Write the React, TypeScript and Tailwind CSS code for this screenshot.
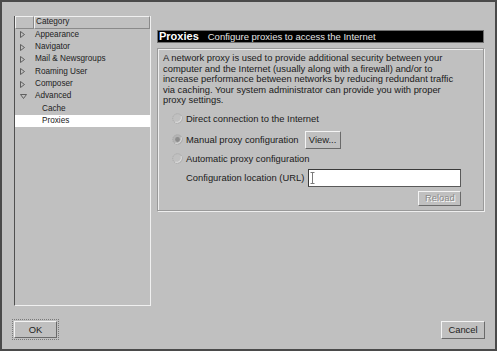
import React from 'react'

const font = "font-['Liberation_Sans',Arial,sans-serif]"

const Arrow = ({ open }: { open?: boolean }) =>
  open ? (
    <svg width="7" height="5" viewBox="0 0 7 5" className="shrink-0">
      <polygon points="0.5,0.5 6.5,0.5 3.5,4.5" fill="none" stroke="#555" strokeWidth="0.9" />
    </svg>
  ) : (
    <svg width="5" height="7" viewBox="0 0 5 7" className="shrink-0">
      <polygon points="0.5,0.5 4.5,3.5 0.5,6.5" fill="none" stroke="#555" strokeWidth="0.9" />
    </svg>
  )

const Radio = ({ checked }: { checked?: boolean }) => (
  <svg width="11" height="11" viewBox="0 0 11 11" className="shrink-0">
    <circle cx="5.5" cy="5.5" r="4.8" fill={checked ? '#b4b4b4' : 'none'} stroke="#a2a2a2" strokeWidth="0.8" strokeDasharray="1.2 0.8" />
    <path d="M9.2 3.2 A4.8 4.8 0 0 1 3.2 9.2" fill="none" stroke="#e6e6e6" strokeWidth="0.8" />
    {checked && <circle cx="5.5" cy="5.5" r="2.4" fill="#8c8c8c" />}
  </svg>
)

const TreeRow = ({ label, arrow, open, indent, selected }: { label: string; arrow?: boolean; open?: boolean; indent?: boolean; selected?: boolean }) => (
  <div className={`h-[12.3px] flex items-center ${selected ? 'bg-white' : ''}`}>
    <div className="w-[20px] pl-[5px] flex items-center">{arrow && <Arrow open={open} />}</div>
    <span className={`text-[8.2px] leading-none text-[#222] ${indent ? 'pl-[7px]' : ''}`}>{label}</span>
  </div>
)

const RaisedButton = ({ children, className = '', disabled }: { children: React.ReactNode; className?: string; disabled?: boolean }) => (
  <div
    className={`flex items-center justify-center bg-[#c0c0c0] border border-t-[#f4f4f4] border-l-[#f4f4f4] border-b-[#6a6a6a] border-r-[#6a6a6a] text-[9.4px] leading-none ${
      disabled ? 'text-[#8a8a8a] [text-shadow:1px_1px_0_#fff]' : 'text-[#222]'
    } ${className}`}
  >
    {children}
  </div>
)

export default function App() {
  return (
    <div className={`w-[499px] h-[352px] bg-white ${font}`}>
      <div className="w-[497px] h-[351px] border-2 border-[#4a4a4a] bg-[#c0c0c0] flex flex-col">
        <div className="flex pl-[12px] pt-[14px]">
          {/* tree */}
          <div className="w-[137px] h-[290px] border-l border-l-[#505050] border-r border-r-[#f0f0f0] border-b border-b-[#f0f0f0] flex flex-col">
            <div className="h-[12.7px] flex">
              <div className="w-[19px] border border-t-[#f0f0f0] border-l-[#f0f0f0] border-b-[#8a8a8a] border-r-[#8a8a8a]" />
              <div className="flex-1 border border-t-[#f0f0f0] border-l-[#f0f0f0] border-b-[#8a8a8a] border-r-[#8a8a8a] flex items-center pl-[1px] text-[8.2px] text-[#222] leading-none">
                Category
              </div>
            </div>
            <TreeRow label="Appearance" arrow />
            <TreeRow label="Navigator" arrow />
            <TreeRow label="Mail & Newsgroups" arrow />
            <TreeRow label="Roaming User" arrow />
            <TreeRow label="Composer" arrow />
            <TreeRow label="Advanced" arrow open />
            <TreeRow label="Cache" indent />
            <TreeRow label="Proxies" indent selected />
          </div>

          {/* right pane */}
          <div className="ml-[6px] mt-[14px] w-[327px] flex flex-col">
            <div className="h-[13px] bg-black border border-[#707070] flex items-center pl-[1px] gap-[9px] leading-none">
              <span className="text-[11px] font-bold text-white">Proxies</span>
              <span className="text-[9.5px] text-[#e4e4e4]">Configure proxies to access the Internet</span>
            </div>

            <div className="mt-[5px] h-[163px] border border-[#9a9a9a] shadow-[inset_1px_1px_0_#eeeeee,1px_1px_0_#eeeeee] flex flex-col">
              <p className="pl-[5px] pt-[4px] text-[9.4px] leading-[10.5px] text-[#1a1a1a]">
                A network proxy is used to provide additional security between your
                <br />
                computer and the Internet (usually along with a firewall) and/or to
                <br />
                increase performance between networks by reducing redundant traffic
                <br />
                via caching. Your system administrator can provide you with proper
                <br />
                proxy settings.
              </p>

              <div className="ml-[14px] mt-[6px] flex flex-col text-[9.4px] leading-none text-[#1a1a1a]">
                <div className="h-[14px] flex items-center gap-[3px]">
                  <Radio />
                  <span>Direct connection to the Internet</span>
                </div>
                <div className="mt-[5px] h-[18px] flex items-center gap-[3px]">
                  <Radio checked />
                  <span>Manual proxy configuration</span>
                  <RaisedButton className="ml-[3px] w-[36px] h-[18px]">View...</RaisedButton>
                </div>
                <div className="mt-[3px] h-[14px] flex items-center gap-[3px]">
                  <Radio />
                  <span>Automatic proxy configuration</span>
                </div>
                <div className="ml-[14px] mt-[3px] w-fit flex flex-col items-end">
                  <div className="h-[18px] flex items-center gap-[4px]">
                    <span>Configuration location (URL)</span>
                    <div className="w-[153px] h-[18px] bg-white border border-t-[#3a3a3a] border-l-[#3a3a3a] border-b-[#5a5a5a] border-r-[#5a5a5a] flex items-center pl-[1px]">
                      <svg width="5" height="12" viewBox="0 0 5 12">
                        <path d="M0.5 0.5 H4.5 M2.5 0.5 V11.5 M0.5 11.5 H4.5" stroke="#7a7a7a" strokeWidth="1" fill="none" />
                      </svg>
                    </div>
                  </div>
                  <RaisedButton disabled className="mt-[4px] w-[43px] h-[15px]">
                    Reload
                  </RaisedButton>
                </div>
              </div>
            </div>
          </div>
        </div>

        {/* bottom buttons */}
        <div className="mt-[13px] pl-[10px] pr-[10px] flex items-center justify-between">
          <div className="w-[47px] h-[21px] border border-dotted border-[#7a7a7a] p-[1px]">
            <RaisedButton className="w-full h-full">OK</RaisedButton>
          </div>
          <RaisedButton className="w-[44px] h-[18px]">Cancel</RaisedButton>
        </div>
      </div>
    </div>
  )
}
